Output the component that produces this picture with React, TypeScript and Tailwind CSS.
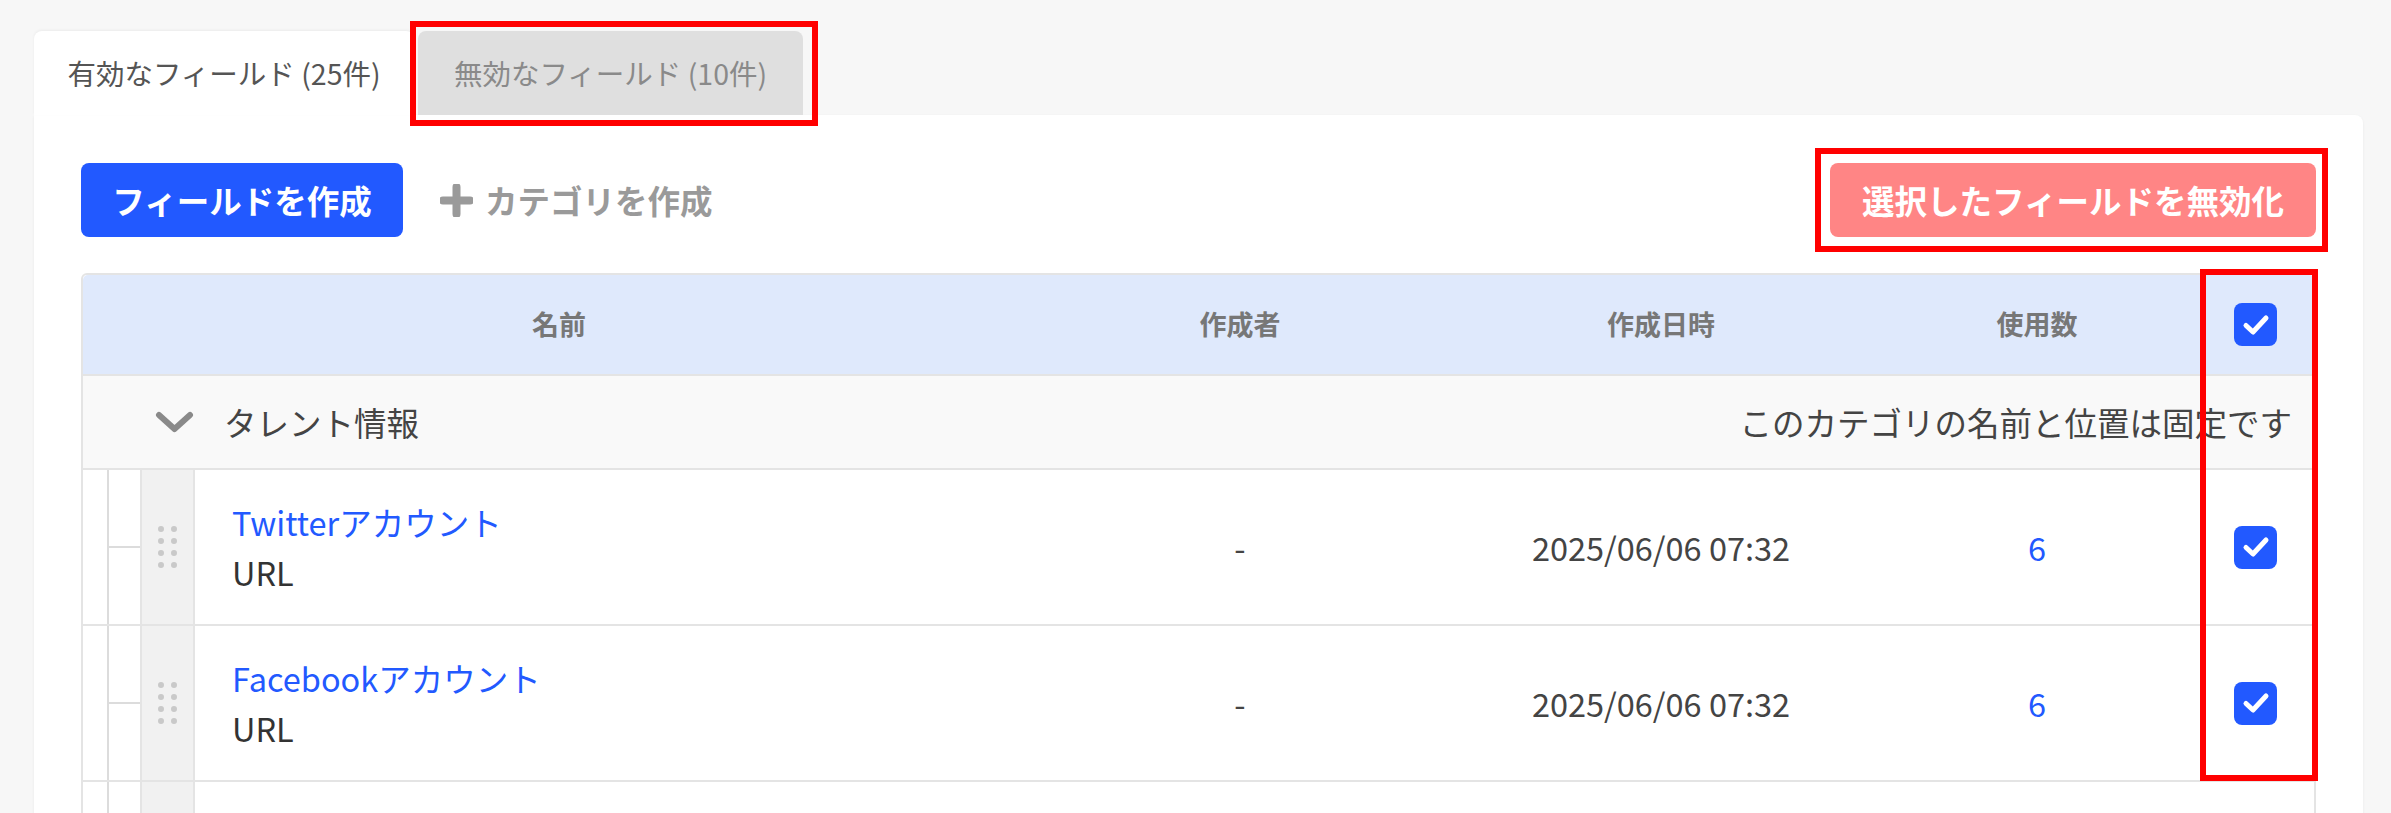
import React from "react";

const rows = [
  { name: "Twitterアカウント", type: "URL", author: "-", date: "2025/06/06 07:32", count: 6 },
  { name: "Facebookアカウント", type: "URL", author: "-", date: "2025/06/06 07:32", count: 6 },
];

function CheckBox() {
  return (
    <div className="flex h-[43px] w-[43px] items-center justify-center rounded-[8px] bg-[#2259ff]">
      <svg width="28" height="22" viewBox="0 0 28 22" fill="none">
        <path d="M4 11.5 L11 18 L24 4" stroke="white" strokeWidth="5" strokeLinecap="round" strokeLinejoin="round" />
      </svg>
    </div>
  );
}

function DragHandle() {
  return (
    <div className="grid grid-cols-2 gap-x-[7px] gap-y-[6px]">
      {[0, 1, 2, 3, 4, 5, 6, 7].map(i => (
        <span key={i} className="block h-[6px] w-[6px] rounded-full bg-[#c9c9c9]" />
      ))}
    </div>
  );
}

function TreeCells({ children }: { children?: React.ReactNode }) {
  return (
    <>
      <div className="flex w-[57px] bg-white">
        <div className="w-[24px]" />
        <div className="w-[2px] bg-[#dcdcdc]" />
        <div className="flex flex-1 items-center">
          <div className="h-[2px] w-full bg-[#dcdcdc]" />
        </div>
      </div>
      <div className="flex w-[55px] items-center justify-center border-x-2 border-[#e4e4e4] bg-[#f1f1f1]">
        <DragHandle />
      </div>
      {children}
    </>
  );
}

export default function App() {
  return (
    <div className="h-screen overflow-hidden bg-[#f7f7f7] font-['Noto_Sans_CJK_JP','Noto_Sans',sans-serif] text-[#333]">
      <div className="pl-[34px] pr-[28px] pt-[31px]">
        {/* tabs */}
        <div className="flex gap-[4px]">
          <div className="flex h-[84px] w-[380px] items-center justify-center rounded-t-[8px] bg-white text-[28.5px] text-[#555] shadow-[0_-1px_3px_rgba(0,0,0,0.05)]">
            有効なフィールド (25件)
          </div>
          <div className="relative flex h-[84px] w-[385px] items-center justify-center rounded-t-[8px] bg-[#dfdfdf] text-[28.5px] text-[#8a8a8a]">
            無効なフィールド (10件)
            <div className="absolute left-[-8px] top-[-10px] h-[105px] w-[408px] border-[6px] border-[#ff0000]" />
          </div>
        </div>

        {/* card */}
        <div className="rounded-b-[8px] rounded-tr-[8px] bg-white px-[47px] pt-[48px] pb-[40px] shadow-[0_1px_3px_rgba(0,0,0,0.06)]">
          <div className="flex h-[74px] items-center justify-between">
            <div className="flex items-center">
              <button className="h-[74px] w-[322px] rounded-[8px] bg-[#2259ff] text-[32.5px] font-bold text-white">
                フィールドを作成
              </button>
              <div className="ml-[37px] flex items-center gap-[12px] text-[32.5px] font-bold text-[#9a9a9a]">
                <svg width="33" height="33" viewBox="0 0 33 33">
                  <path d="M16.5 3 V30 M3 16.5 H30" stroke="#9a9a9a" strokeWidth="8" strokeLinecap="round" />
                </svg>
                <span>カテゴリを作成</span>
              </div>
            </div>
            <div className="relative">
              <button className="h-[74px] w-[486px] rounded-[8px] bg-[#ff8585] text-[32.5px] font-bold text-white">
                選択したフィールドを無効化
              </button>
              <div className="absolute left-[-15px] top-[-15px] h-[104px] w-[513px] border-[6px] border-[#ff0000]" />
            </div>
          </div>

          {/* table */}
          <div className="relative mt-[36px] rounded-t-[6px] border-x-2 border-t-2 border-[#e4e4e4]">
            <div className="grid h-[99px] grid-cols-[952px_410px_432px_320px_1fr] items-center rounded-t-[5px] bg-[#dfe9fc] text-[27px] font-bold text-[#777]">
              <div className="text-center">名前</div>
              <div className="text-center">作成者</div>
              <div className="text-center">作成日時</div>
              <div className="text-center">使用数</div>
              <div className="flex justify-center">
                <CheckBox />
              </div>
            </div>

            <div className="flex h-[94px] items-center justify-between border-t-2 border-[#e4e4e4] bg-[#f9f9f9] pl-[72px] pr-[22px] text-[32.5px] text-[#444]">
              <div className="flex items-center gap-[30px]">
                <svg width="39" height="22" viewBox="0 0 39 22" fill="none">
                  <path d="M4 4 L19.5 18 L35 4" stroke="#8a8a8a" strokeWidth="6" strokeLinecap="round" strokeLinejoin="round" />
                </svg>
                <span>タレント情報</span>
              </div>
              <span>このカテゴリの名前と位置は固定です</span>
            </div>

            {rows.map(r => (
              <div key={r.name} className="flex h-[156px] border-t-2 border-[#e4e4e4]">
                <TreeCells>
                  <div className="grid flex-1 grid-cols-[840px_410px_432px_320px_1fr] items-center text-[32.5px]">
                    <div className="pl-[37px] leading-[50px]">
                      <div className="text-[#2259ff]">{r.name}</div>
                      <div className="text-[#333]">{r.type}</div>
                    </div>
                    <div className="text-center text-[#444]">{r.author}</div>
                    <div className="text-center text-[#444]">{r.date}</div>
                    <div className="text-center text-[#2259ff]">{r.count}</div>
                    <div className="flex justify-center">
                      <CheckBox />
                    </div>
                  </div>
                </TreeCells>
              </div>
            ))}

            {/* next row, cut off by the window */}
            <div className="flex h-[156px] border-t-2 border-[#e4e4e4]">
              <TreeCells>
                <div className="flex-1" />
              </TreeCells>
            </div>

            <div className="absolute left-[2117px] top-[-6px] h-[512px] w-[118px] border-[6px] border-[#ff0000]" />
          </div>
        </div>
      </div>
    </div>
  );
}
